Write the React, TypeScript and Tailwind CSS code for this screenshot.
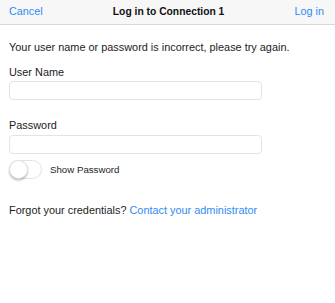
import React from "react";

export default function App() {
  return (
    <div
      className="w-[335px] h-[303px] bg-white text-[#1c1c1c] text-[10.9px]"
      style={{ fontFamily: '"Liberation Sans", Arial, sans-serif' }}
    >
      <div className="h-[25px] bg-[#f7f7f7] border-b border-[#d9d9d9] flex items-center justify-between pl-[9px] pr-[11px] pb-[1px]">
        <span className="text-[#2f8cf3] text-[10.8px] leading-[13px]">Cancel</span>
        <span className="font-bold text-[10.3px] leading-[13px] text-[#111]">Log in to Connection 1</span>
        <span className="text-[#2f8cf3] text-[10.8px] leading-[13px]">Log in</span>
      </div>
      <div className="px-[9px]">
        <p className="mt-[16px] leading-[13px]">
          Your user name or password is incorrect, please try again.
        </p>
        <div className="mt-[12px] leading-[13px]">User Name</div>
        <div className="mt-[2px] w-[253px] h-[19px] rounded-[4px] border border-[#e3e3e3] bg-white" />
        <div className="mt-[19px] leading-[13px]">Password</div>
        <div className="mt-[3px] w-[253px] h-[19px] rounded-[4px] border border-[#e3e3e3] bg-white" />
        <div className="mt-[6px] flex items-center gap-[8px]">
          <div className="relative w-[33px] h-[19px] rounded-full border border-[#e3e3e3] bg-white">
            <div className="absolute left-[-1px] top-[-1px] w-[19px] h-[19px] rounded-full bg-white border border-[#e0e0e0] shadow-[0_1.5px_2px_rgba(0,0,0,0.25)]" />
          </div>
          <span className="leading-[13px] text-[9.7px]">Show Password</span>
        </div>
        <p className="mt-[25px] leading-[13px]">
          Forgot your credentials?{" "}
          <span className="text-[#2f8cf3]">Contact your administrator</span>
        </p>
      </div>
    </div>
  );
}
